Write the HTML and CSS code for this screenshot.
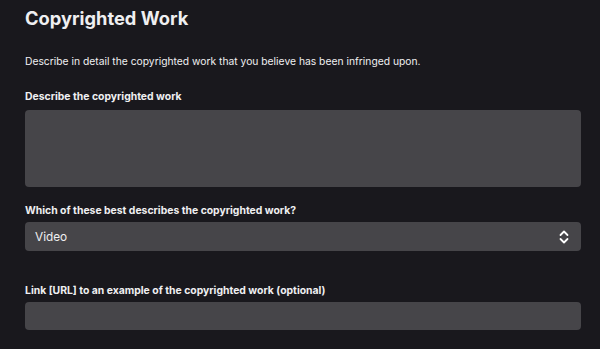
FILE: index.html
```html
<!DOCTYPE html>
<html lang="en">
<head>
  <meta charset="UTF-8">
  <title>Copyrighted Work</title>
  <link rel="stylesheet" href="styles.css">
</head>
<body>

  <div class="page">
    <h1>Copyrighted Work</h1>
    <p class="intro">Describe in detail the copyrighted work that you believe has been infringed upon.</p>

    <div class="field first">
      <label for="desc">Describe the copyrighted work</label>
      <textarea id="desc"></textarea>
    </div>

    <div class="field">
      <label for="kind">Which of these best describes the copyrighted work?</label>
      <div class="select">
        <span>Video</span>
        <svg width="10" height="14" viewBox="0 0 10 14">
          <path d="M1.5 5 L5 1.5 L8.5 5" fill="none" stroke="#fff" stroke-width="1.8" stroke-linecap="round" stroke-linejoin="round"/>
          <path d="M1.5 9 L5 12.5 L8.5 9" fill="none" stroke="#fff" stroke-width="1.8" stroke-linecap="round" stroke-linejoin="round"/>
        </svg>
      </div>
    </div>

    <div class="field link-field">
      <label for="link">Link [URL] to an example of the copyrighted work (optional)</label>
      <input type="text" id="link" />
    </div>
  </div>

</body>
</html>
```

FILE: styles.css
```css
body {
  margin: 0;
  background: #19181d;
  color: #efeff1;
  font-family: Inter, "Noto Sans", sans-serif;
}

.page {
  padding: 5px 19px 0 25px;
}

h1 {
  font-size: 18.3px;
  font-weight: 700;
  margin: 0;
  line-height: 26px;
}

.intro {
  font-size: 10.3px;
  margin: 22px 0 0;
  line-height: 16px;
}

.field {
  margin-top: 17px;
}

.field label {
  display: block;
  font-size: 10.4px;
  font-weight: 700;
  line-height: 14px;
  margin-bottom: 4px;
}

.field.first {
  margin-top: 21px;
}

.field.first label {
  margin-bottom: 6px;
}

textarea, input, .select {
  display: block;
  box-sizing: border-box;
  width: 100%;
  background: #464549;
  border: none;
  border-radius: 4px;
  color: #efeff1;
  font-family: inherit;
}

textarea {
  height: 77px;
  resize: none;
}

.select {
  height: 29px;
  display: flex;
  align-items: center;
  justify-content: space-between;
  padding: 0 12px 0 10px;
  font-size: 11.8px;
}

.field.link-field {
  margin-top: 33px;
}

input {
  height: 28px;
}
```
